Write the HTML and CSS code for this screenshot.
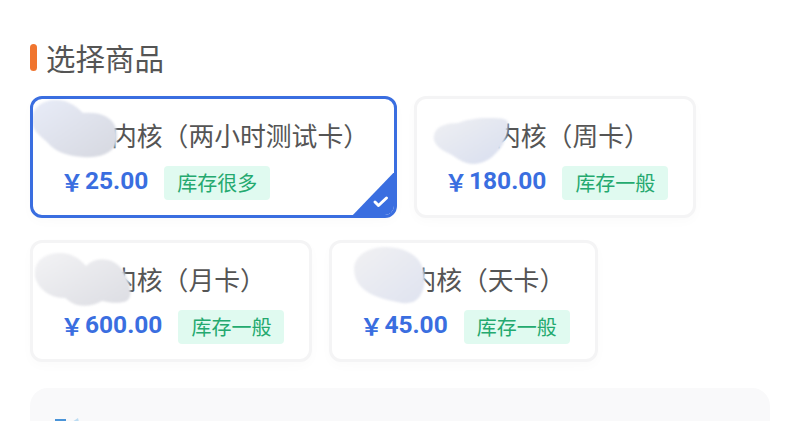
FILE: index.html
```html
<!DOCTYPE html>
<html lang="zh-CN">
<head>
<meta charset="utf-8">
<title>选择商品</title>
<link rel="stylesheet" href="styles.css">
</head>
<body>
<main class="page">
  <h2 class="heading"><span class="heading-bar"></span>选择商品</h2>
  <div class="cards">
    <div class="card card-active">
      <svg class="blob blob-a" viewBox="0 0 86 58" aria-hidden="true"><defs><linearGradient id="ga" x1="0" y1="0" x2="1" y2="1"><stop offset="0" stop-color="#e8ecf8"/><stop offset="1" stop-color="#d6d8e0"/></linearGradient></defs><path fill="url(#ga)" d="M0 20C0 8 10 0 24 0c12 0 20 6 27 13 12-1 25 1 31 11 4 8 4 16 1 22-6 9-18 12-32 11C36 56 23 52 15 42 7 35 0 30 0 20Z"/></svg>
      <div class="title">内核（两小时测试卡）</div>
      <div class="row"><span class="price"><span class="yen">￥</span>25.00</span><span class="stock">库存很多</span></div>
      <svg class="corner" viewBox="0 0 47 49" aria-hidden="true"><path class="corner-fill" d="M47 0V49H0Z"/><path class="corner-check" d="M25 33l3.500 3.500 8-7.500"/></svg>
    </div>
    <div class="card">
      <svg class="blob blob-b" viewBox="0 0 75 46" aria-hidden="true"><defs><linearGradient id="gb" x1="0" y1="0" x2="1" y2="1"><stop offset="0" stop-color="#eff0f3"/><stop offset="1" stop-color="#d8deef"/></linearGradient></defs><path fill="url(#gb)" d="M1 17C3 8 13 5 25 5c7-3 18-5 30-5 9 0 19 0 20 4 0 10-3 22-10 29-7 8-15 13-25 13-9 0-16-6-23-10C8 32-1 26 1 17Z"/></svg>
      <div class="title">内核（周卡）</div>
      <div class="row"><span class="price"><span class="yen">￥</span>180.00</span><span class="stock">库存一般</span></div>
    </div>
    <div class="card">
      <svg class="blob blob-c" viewBox="0 0 96 53" aria-hidden="true"><defs><linearGradient id="gc" x1="0" y1="0" x2="1" y2="1"><stop offset="0" stop-color="#f3f3f5"/><stop offset="1" stop-color="#dcdde3"/></linearGradient></defs><path fill="url(#gc)" d="M0 18C1 6 12 0 25 0c12 0 20 6 26 13 6-6 13-8 22-6 10 2 17 11 21 23 3 10 2 18-6 19-8 2-15 0-21-1-7 4-16 6-25 4-6-2-9-5-12-7C17 45 8 39 3 31 1 27-1 23 0 18Z"/></svg>
      <div class="title">内核（月卡）</div>
      <div class="row"><span class="price"><span class="yen">￥</span>600.00</span><span class="stock">库存一般</span></div>
    </div>
    <div class="card">
      <svg class="blob blob-d" viewBox="0 0 71 57" aria-hidden="true"><defs><linearGradient id="gd" x1="0" y1="0" x2="1" y2="1"><stop offset="0" stop-color="#f1f1f3"/><stop offset="1" stop-color="#dfe3f0"/></linearGradient></defs><path fill="url(#gd)" d="M0 22C0 8 16 0 31 0c14 0 30 5 36 17 5 10 5 22 0 30-3 7-10 10-19 9-8-2-16-3-24-6C10 45 0 36 0 22Z"/></svg>
      <div class="title">内核（天卡）</div>
      <div class="row"><span class="price"><span class="yen">￥</span>45.00</span><span class="stock">库存一般</span></div>
    </div>
  </div>
  <section class="panel">
    <svg class="panel-icon" viewBox="0 0 24 24" aria-hidden="true"><rect x="0" y="1" width="11" height="22" fill="#4a94d8"/><path d="M17 4l6-4 1 4Z" fill="#bcdcf2"/></svg>
  </section>
</main>
</body>
</html>
```
FILE: styles.css
```css
* { box-sizing: border-box; }
html, body { margin: 0; height: 421px; overflow: hidden; background: #fff; }
body { font-family: "Noto Sans CJK SC", Roboto, sans-serif; color: #555; }
.page { padding: 39px 30px 0; }
.heading { display: flex; align-items: center; gap: 9px; margin: 0; height: 36px; font-size: 29.500px; line-height: 34px; font-weight: 400; color: #555; }
.heading-bar { width: 7px; height: 27px; border-radius: 3.500px; background: #f0752f; }
.cards { display: flex; flex-wrap: wrap; align-items: flex-start; column-gap: 17px; row-gap: 22px; margin-top: 21px; }
.card { position: relative; height: 122px; padding: 19px 25px 0 26px; border: 3px solid #f4f4f5; border-radius: 12px; background: #fff; box-shadow: 0 4px 12px rgba(0,0,0,.02); overflow: hidden; }
.card-active { border-color: #3a6ee0; }
.title { padding-left: 52px; font-size: 25.800px; line-height: 34px; white-space: nowrap; color: #555; }
.row { display: flex; align-items: center; gap: 16px; margin-top: 14px; }
.price { display: flex; align-items: center; padding-bottom: 4px; font-family: Roboto, sans-serif; font-size: 24.500px; line-height: 30px; font-weight: 700; color: #3a6ee0; white-space: nowrap; }
.yen { font-family: "Noto Sans CJK SC", sans-serif; font-size: 23px; font-weight: 700; width: 26px; text-align: center; }
.stock { height: 34px; padding: 0 13px; border-radius: 4px; background: #e0faf0; color: #24a96f; font-size: 20px; line-height: 34px; white-space: nowrap; }
.blob { position: absolute; filter: blur(.8px); }
.blob-a { left: -1px; top: 1px; width: 86px; height: 58px; }
.blob-b { left: 16px; top: 19px; width: 75px; height: 46px; }
.blob-c { left: 2px; top: 10px; width: 96px; height: 53px; }
.blob-d { left: 22px; top: 4px; width: 71px; height: 57px; }
.corner { position: absolute; right: -3px; bottom: -3px; width: 47px; height: 49px; }
.corner-fill { fill: #3a6ee0; }
.corner-check { fill: none; stroke: #fff; stroke-width: 3; stroke-linecap: round; stroke-linejoin: round; }
.panel { height: 33px; margin-top: 26px; padding: 30px 25px 0; border-radius: 18px 18px 0 0; background: #f9f9fa; overflow: hidden; }
.panel-icon { display: block; width: 24px; height: 24px; }
```
